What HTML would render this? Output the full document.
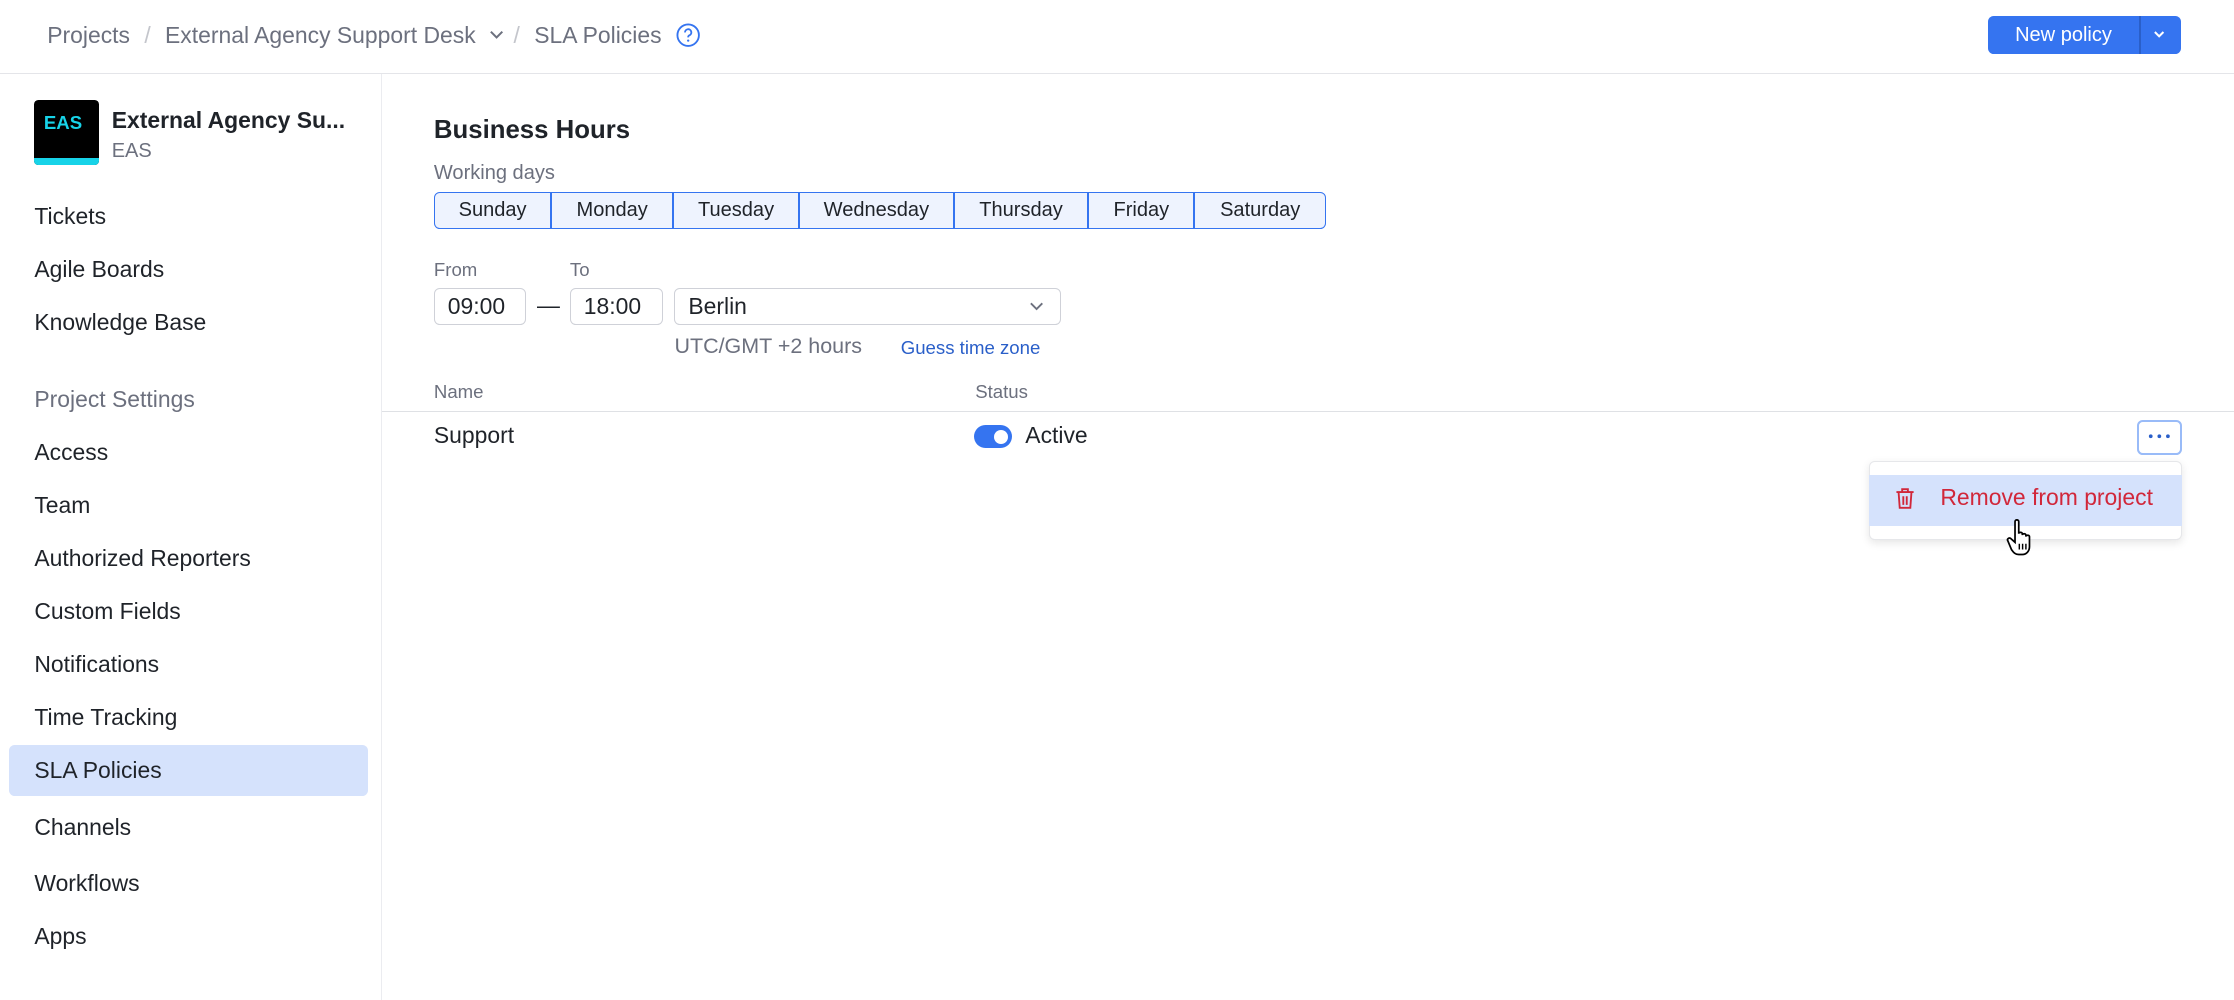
<!DOCTYPE html>
<html><head><meta charset="utf-8"><style>
*{box-sizing:border-box;margin:0;padding:0}
html,body{width:2234px;height:1000px;overflow:hidden;background:#fff}
#w{zoom:1.432;width:1560px;height:699px;position:relative;font-family:"Liberation Sans",sans-serif;color:#1f2329}
.a{position:absolute;white-space:nowrap}
.g{color:#6c707e}
.nav{font-size:16px;left:24px;line-height:20px}
.day{position:absolute;top:134px;height:26px;border:1px solid #3574f0;background:#eef3fe;font-size:14px;line-height:24px;text-align:center;margin-left:-1px}
.inp{position:absolute;top:201px;height:26px;border:1px solid #cfd1d8;border-radius:4px;font-size:16px;line-height:24px;padding-left:9px}
</style></head><body><div id="w">
<div class="a g" style="left:33px;top:15px;font-size:16px;line-height:20px">Projects<span style="color:#c4c6cc;margin:0 10px">/</span>External Agency Support Desk <svg width="12" height="12" viewBox="0 0 12 12" style="margin:0 6px 0 4px"><path d="M2 4l4 4 4-4" fill="none" stroke="#6c707e" stroke-width="1.4"/></svg><span style="color:#c4c6cc;margin-right:10px">/</span>SLA Policies</div>
<svg class="a" style="left:472px;top:16px" width="17" height="17" viewBox="0 0 17 17"><circle cx="8.5" cy="8.5" r="7.5" fill="none" stroke="#3574f0" stroke-width="1.3"/><path d="M6.3 6.6a2.2 2.2 0 1 1 3 2c-.7.3-.8.8-.8 1.4" fill="none" stroke="#3574f0" stroke-width="1.3"/><circle cx="8.5" cy="12.3" r=".8" fill="#3574f0"/></svg>
<div class="a" style="left:1388px;top:11px;width:135px;height:27px;background:#3574f0;border-radius:4px"></div>
<div class="a" style="left:1388px;top:11px;width:106px;height:27px;color:#fff;font-size:14px;line-height:27px;text-align:center">New policy</div>
<div class="a" style="left:1494px;top:11px;width:1px;height:27px;background:#2a5fc9"></div>
<svg class="a" style="left:1503px;top:19px" width="10" height="10" viewBox="0 0 10 10"><path d="M2 3.5l3 3 3-3" fill="none" stroke="#fff" stroke-width="1.4"/></svg>
<div class="a" style="left:0;top:51px;width:1560px;height:1px;background:#e4e5e9"></div>
<div class="a" style="left:266px;top:52px;width:1px;height:650px;background:#ebecf0"></div>
<div class="a" style="left:24px;top:70px;width:45px;height:45px;background:#000;border-radius:3px;overflow:hidden"><div style="position:absolute;bottom:0;left:0;width:45px;height:5px;background:#17d3e8"></div><div style="position:absolute;left:0;top:8px;width:40px;text-align:center;color:#17d3e8;font-weight:bold;font-size:13px">EAS</div></div>
<div class="a" style="left:78px;top:75px;font-weight:bold;font-size:16px">External Agency Su...</div>
<div class="a g" style="left:78px;top:98px;font-size:14px">EAS</div>
<div class="a" style="left:6px;top:520px;width:251px;height:36px;background:#d5e2fc;border-radius:4px"></div>
<div class="a nav" style="top:141px">Tickets</div>
<div class="a nav" style="top:178px">Agile Boards</div>
<div class="a nav" style="top:215px">Knowledge Base</div>
<div class="a nav g" style="top:269px">Project Settings</div>
<div class="a nav" style="top:306px">Access</div>
<div class="a nav" style="top:343px">Team</div>
<div class="a nav" style="top:380px">Authorized Reporters</div>
<div class="a nav" style="top:417px">Custom Fields</div>
<div class="a nav" style="top:454px">Notifications</div>
<div class="a nav" style="top:491px">Time Tracking</div>
<div class="a nav" style="top:528px">SLA Policies</div>
<div class="a nav" style="top:568px">Channels</div>
<div class="a nav" style="top:607px">Workflows</div>
<div class="a nav" style="top:644px">Apps</div>
<div class="a" style="left:303px;top:81px;font-weight:bold;font-size:18px">Business Hours</div>
<div class="a g" style="left:303px;top:113px;font-size:14px">Working days</div>
<div class="day" style="left:304px;width:82px;border-radius:4px 0 0 4px">Sunday</div>
<div class="day" style="left:386px;width:85px">Monday</div>
<div class="day" style="left:471px;width:88px">Tuesday</div>
<div class="day" style="left:559px;width:108px">Wednesday</div>
<div class="day" style="left:667px;width:94px">Thursday</div>
<div class="day" style="left:761px;width:74px">Friday</div>
<div class="day" style="left:835px;width:92px;border-radius:0 4px 4px 0">Saturday</div>
<div class="a g" style="left:303px;top:181px;font-size:13px">From</div>
<div class="a g" style="left:398px;top:181px;font-size:13px">To</div>
<div class="inp" style="left:303px;width:64px">09:00</div>
<div class="a" style="left:375px;top:204px;font-size:16px">—</div>
<div class="inp" style="left:398px;width:65px">18:00</div>
<div class="inp" style="left:471px;width:270px">Berlin</div>
<svg class="a" style="left:718px;top:209px" width="12" height="10" viewBox="0 0 12 10"><path d="M2 3l4 4 4-4" fill="none" stroke="#6c707e" stroke-width="1.3"/></svg>
<div class="a g" style="left:471px;top:233px;font-size:15px">UTC/GMT +2 hours</div>
<div class="a" style="left:629px;top:235px;font-size:13px;color:#2a5fc9">Guess time zone</div>
<div class="a g" style="left:303px;top:266px;font-size:13px">Name</div>
<div class="a g" style="left:681px;top:266px;font-size:13px">Status</div>
<div class="a" style="left:267px;top:287px;width:1293px;height:1px;background:#dfe1e5"></div>
<div class="a" style="left:303px;top:295px;font-size:16px">Support</div>
<div class="a" style="left:680px;top:297px;width:27px;height:16px;background:#3574f0;border-radius:8px"><div style="position:absolute;right:3px;top:3px;width:10px;height:10px;border-radius:5px;background:#fff"></div></div>
<div class="a" style="left:716px;top:295px;font-size:16px">Active</div>
<div class="a" style="left:1492px;top:293px;width:32px;height:25px;border:2px solid #99bbf8;border-radius:4px;background:#fff"></div>
<svg class="a" style="left:1498px;top:302px" width="20" height="6"><circle cx="4" cy="3" r="1.3" fill="#2a5fc9"/><circle cx="10" cy="3" r="1.3" fill="#2a5fc9"/><circle cx="16" cy="3" r="1.3" fill="#2a5fc9"/></svg>
<div class="a" style="left:1305px;top:322px;width:219px;height:55px;background:#fff;border:1px solid #e6e7ea;border-radius:4px;box-shadow:0 2px 6px rgba(0,0,0,.1)"></div>
<div class="a" style="left:1305px;top:332px;width:219px;height:35px;background:#d5e2fc"></div>
<svg class="a" style="left:1323px;top:340px" width="14" height="16" viewBox="0 0 14 16"><path d="M1 3.5h12M5 3.5V1.5h4v2M2.5 3.5l.8 11h7.4l.8-11M5.8 6.5v6M8.2 6.5v6" fill="none" stroke="#d1273a" stroke-width="1.3"/></svg>
<div class="a" style="left:1355px;top:338px;font-size:16px;color:#d1273a">Remove from project</div>
<svg class="a" style="left:1400px;top:362px" width="24" height="28" viewBox="0 0 24 28"><path d="M7 2.5c0-1.6 2.6-1.6 2.6 0V11c0-1.3 2.5-1.3 2.5 0v1c0-1.3 2.5-1.3 2.5 0v1c0-1.3 2.5-1.3 2.5 0V20c0 3-2 5.5-5 5.5h-2.5c-2.5 0-3.6-1.3-5-3.3L2 16c-.9-1.4 1-2.7 2.2-1.5L7 17z" fill="#fff" stroke="#000" stroke-width="1.2"/><path d="M10 18v4M12.3 18v4M14.6 18v4" stroke="#000" stroke-width="1"/></svg>
</div></body></html>
